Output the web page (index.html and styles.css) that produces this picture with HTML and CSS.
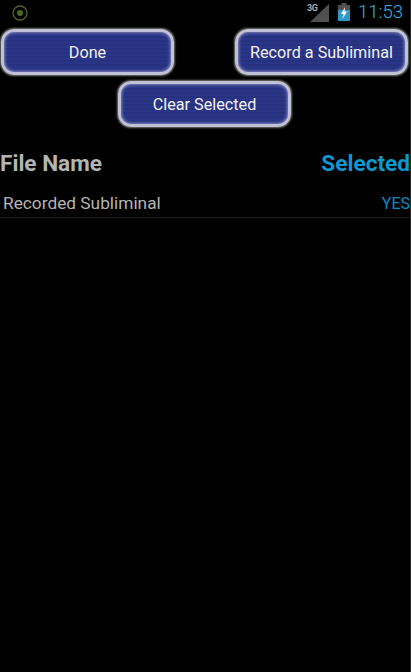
FILE: index.html
```html
<!DOCTYPE html>
<html lang="en">
<head>
<meta charset="utf-8">
<title>Subliminal</title>
<link rel="stylesheet" href="styles.css">
</head>
<body>
<div class="status">
  <svg class="notif" width="20" height="20" viewBox="0 0 20 20"><circle cx="10" cy="11" r="7" fill="none" stroke="#5f5f1e" stroke-width="1.3"/><circle cx="10" cy="11" r="3" fill="#4a6c12"/></svg>
  <div class="status-right">
    <svg class="signal" width="23" height="20" viewBox="0 0 23 20"><polygon points="3,20 22,2 22,20" fill="#505050"/><text x="0" y="9" class="net">3G</text></svg>
    <svg class="battery" width="12" height="18" viewBox="0 0 12 18"><rect x="3.5" y="0" width="5" height="2" fill="#505050"/><rect x="0" y="2" width="12" height="5" fill="#505050"/><rect x="0" y="7" width="12" height="11" fill="#2f9ac8"/><polygon points="7,4 3,11 5.5,11 4.5,16 9,8.5 6.5,8.5" fill="#fff"/></svg>
    <span class="clock">11:53</span>
  </div>
</div>
<div class="btn-row split">
  <button class="btn">Done</button>
  <button class="btn">Record a Subliminal</button>
</div>
<div class="btn-row center">
  <button class="btn">Clear Selected</button>
</div>
<div class="head">
  <span class="head-name">File Name</span>
  <span class="head-sel">Selected</span>
</div>
<div class="row">
  <span class="row-name">Recorded Subliminal</span>
  <span class="row-sel">YES</span>
</div>
</body>
</html>
```
FILE: styles.css
```css
* { box-sizing: border-box; }
html, body { margin: 0; padding: 0; }
body {
  width: 411px;
  height: 672px;
  background: #000;
  font-family: Roboto, sans-serif;
  overflow: hidden;
  border-right: 1px solid #2a2a2a;
}
.status {
  height: 25px;
  display: flex;
  justify-content: space-between;
  align-items: center;
  padding: 0 7px 1px 10px;
}
.status-right { display: flex; align-items: center; }
.signal { margin-right: 8px; }
.net { font: 700 9px "Roboto", sans-serif; fill: #aaa; letter-spacing: -0.3px; }
.battery { margin-right: 8px; }
.clock { color: #33b5e5; font-size: 18.5px; font-weight: 300; line-height: 25px; }
.btn-row { display: flex; }
.split { justify-content: space-between; padding: 4px 2px 0 1px; }
.center { justify-content: center; padding-top: 6px; padding-right: 1px; }
.btn {
  width: 173px;
  height: 46px;
  border: 3px solid #c0c0d6;
  border-radius: 13px;
  background: repeating-linear-gradient(#26317f 0, #26317f 2px, #2a3588 2px, #2a3588 4px);
  box-shadow: 0 0 2px 1px #77776f, inset 0 0 3px 1px #7f86b8;
  color: #f2f2f2;
  font-family: Roboto, sans-serif;
  font-size: 16.2px;
  padding: 1px 0 0;
}
.head {
  display: flex;
  justify-content: space-between;
  align-items: center;
  margin-top: 22px;
  height: 28px;
  font-weight: 700;
  font-size: 22.6px;
}
.head-name { color: #b4b4b4; }
.head-sel { color: #0d98cf; }
.row {
  display: flex;
  justify-content: space-between;
  align-items: center;
  margin-top: 14px;
  height: 27px;
  padding: 0 0 2px 3px;
  font-size: 17.3px;
  border-bottom: 1px solid #1e1e1e;
}
.row-name { color: #b4b4b4; }
.row-sel { color: #0d8cc0; font-size: 16px; }
```
